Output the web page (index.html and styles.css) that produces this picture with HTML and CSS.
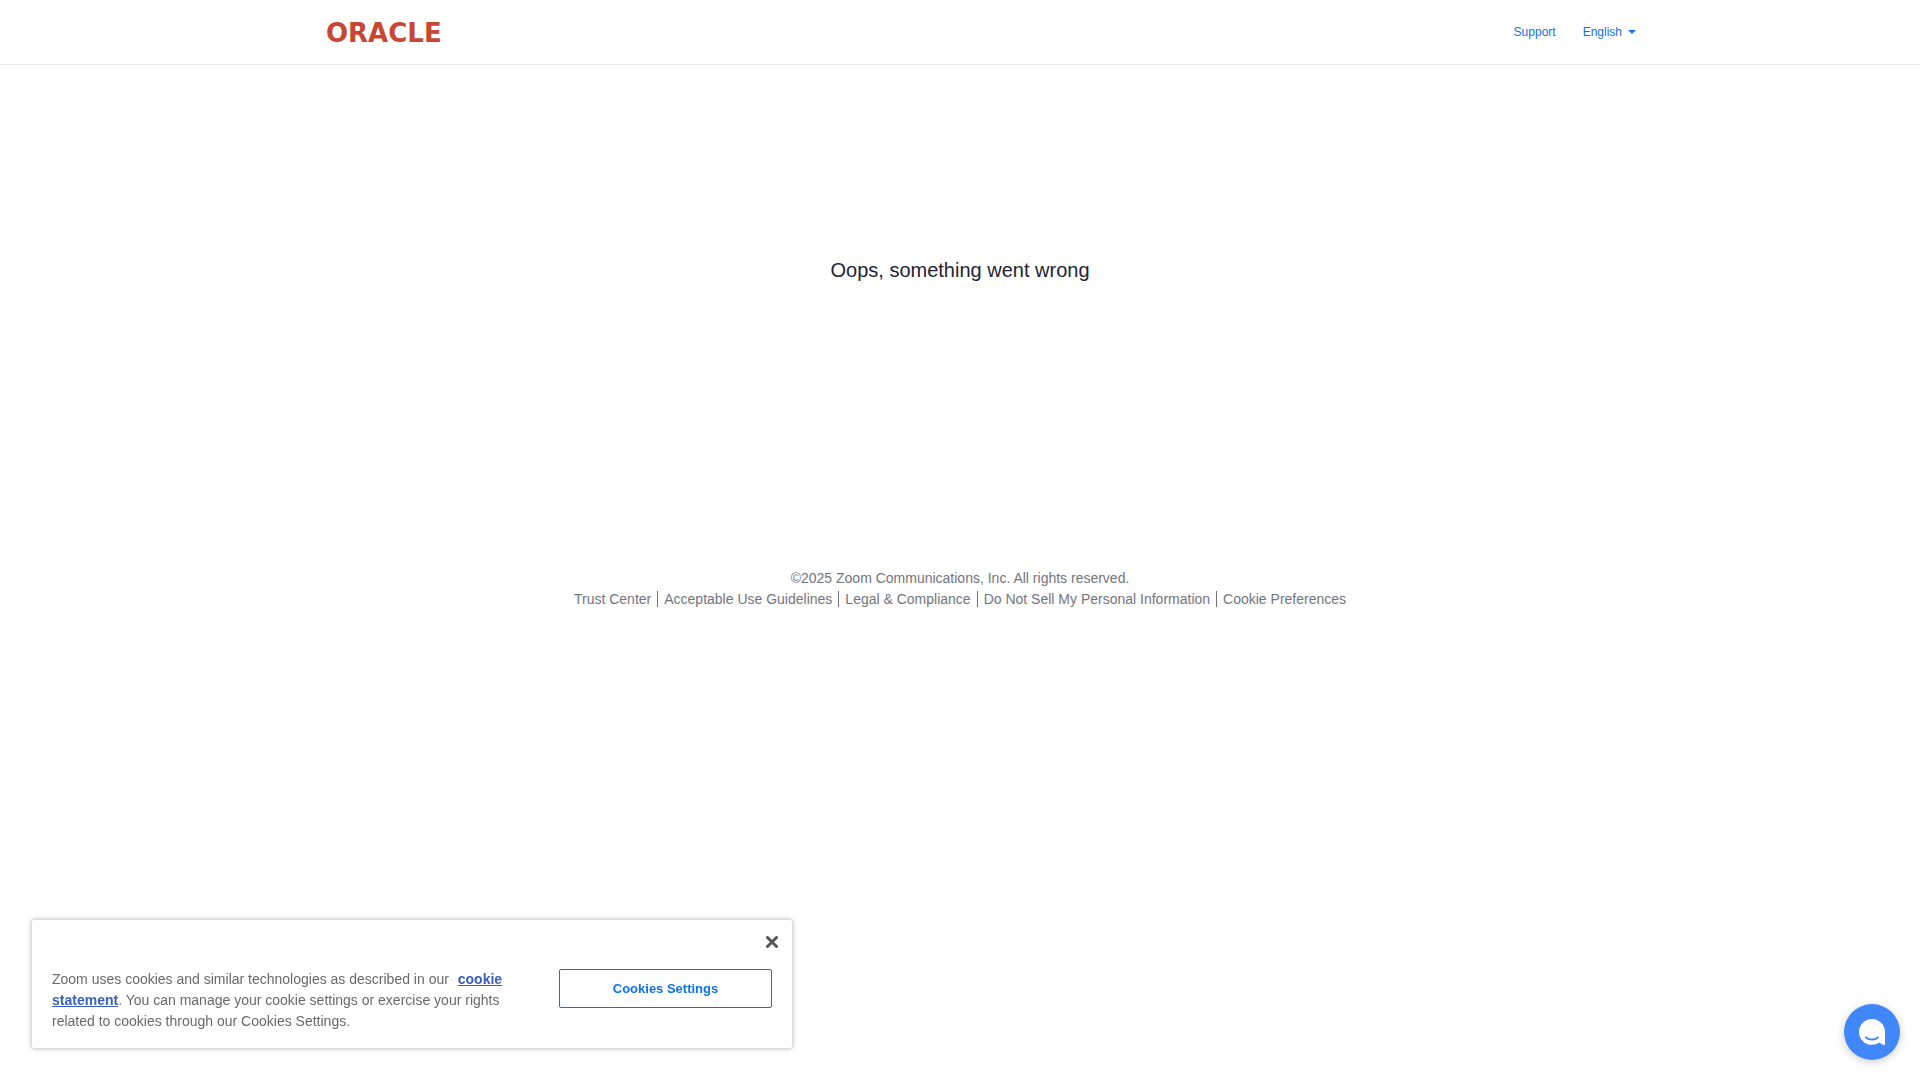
FILE: index.html
```html
<!DOCTYPE html>
<html lang="en">
<head>
<meta charset="utf-8">
<meta name="viewport" content="width=device-width, initial-scale=1">
<title>Error - Zoom</title>
<link rel="stylesheet" href="styles.css">
</head>
<body>
<header class="header">
  <div class="header-inner">
    <a class="logo" href="#" aria-label="Oracle home">
      <svg class="logo-mark" viewBox="0 0 128 32" aria-hidden="true"><text class="logo-text" x="0" y="26">ORACLE</text></svg>
    </a>
    <nav class="nav" aria-label="Main">
      <a class="nav-link" href="#">Support</a>
      <button class="nav-link language" type="button" aria-haspopup="true">English <span class="caret"></span></button>
    </nav>
  </div>
</header>
<main class="content">
  <h1 class="message">Oops, something went wrong</h1>
</main>
<footer class="footer">
  <p class="copyright">©2025 Zoom Communications, Inc. All rights reserved.</p>
  <ul class="footer-links">
    <li class="footer-item"><a class="footer-link" href="#">Trust Center</a></li>
    <li class="footer-item"><a class="footer-link" href="#">Acceptable Use Guidelines</a></li>
    <li class="footer-item"><a class="footer-link" href="#">Legal &amp; Compliance</a></li>
    <li class="footer-item"><a class="footer-link" href="#">Do Not Sell My Personal Information</a></li>
    <li class="footer-item"><a class="footer-link" href="#">Cookie Preferences</a></li>
  </ul>
</footer>
<section class="cookie-banner" aria-label="Cookie notice">
  <button class="close" type="button" aria-label="Close">
    <svg class="close-icon" viewBox="0 0 12 12" aria-hidden="true"><path d="M1.500 1.500l9 9M10.500 1.500l-9 9"/></svg>
  </button>
  <div class="cookie-row">
    <p class="cookie-text">Zoom uses cookies and similar technologies as described in our <a class="cookie-link" href="#">cookie statement</a>. You can manage your cookie settings or exercise your rights related to cookies through our Cookies Settings.</p>
    <button class="cookie-settings" type="button">Cookies Settings</button>
  </div>
</section>
<button class="chat" type="button" aria-label="Open chat">
  <svg class="chat-icon" viewBox="0 0 26 26" aria-hidden="true">
    <path class="chat-bubble" d="M13 0C20 0 26 5.600 26 12.700V25.200Q26 26.300 24.900 25.900Q22.300 25.300 20.500 23.500Q17.200 25.800 13 25.800C5.800 25.800 0 20 0 12.900S5.800 0 13 0Z"/>
    <path class="chat-smile" d="M7 18.400Q9.400 20.600 13 20.600T19 18.400"/>
  </svg>
</button>
</body>
</html>
```
FILE: styles.css
```css
* {
  box-sizing: border-box;
}

body {
  margin: 0;
  background: #fff;
  color: #747487;
  font-family: "Liberation Sans", Arial, sans-serif;
  font-size: 14px;
  line-height: 21px;
}

button {
  padding: 0;
  border: 0;
  background: none;
  font: inherit;
  cursor: pointer;
}

a {
  text-decoration: none;
}

.header {
  border-bottom: 1px solid #e8e8ed;
}

.header-inner {
  display: flex;
  align-items: center;
  justify-content: space-between;
  max-width: 1354px;
  height: 64px;
  margin: 0 auto;
  padding: 0 1px 0 43px;
}

.logo-mark {
  display: block;
  width: 128px;
  height: 32px;
}

.logo-text {
  fill: #c74634;
  font-family: "DejaVu Sans", sans-serif;
  font-size: 26px;
  font-weight: bold;
}

.nav {
  display: flex;
  align-items: center;
  gap: 27px;
}

.nav-link {
  color: #0e71eb;
  font-size: 12px;
  line-height: 20px;
}

.language {
  display: flex;
  align-items: center;
  gap: 6px;
}

.caret {
  border-top: 4px solid #0e71eb;
  border-right: 4px solid transparent;
  border-left: 4px solid transparent;
}

.content {
  padding: 190px 16px 280px;
  text-align: center;
}

.message {
  margin: 0;
  color: #232333;
  font-size: 20px;
  font-weight: normal;
  line-height: 30px;
}

.footer {
  padding: 3px 16px 24px;
  color: #747480;
}

.copyright {
  margin: 0;
  text-align: center;
}

.footer-links {
  display: flex;
  flex-wrap: wrap;
  justify-content: center;
  margin: 0;
  padding: 2px 0;
  list-style: none;
}

.footer-item {
  padding: 0 6px;
  line-height: 16px;
}

.footer-item + .footer-item {
  border-left: 1px solid #747480;
}

.footer-link {
  color: #747480;
}

.cookie-banner {
  position: fixed;
  bottom: 32px;
  left: 32px;
  width: calc(100% - 64px);
  max-width: 760px;
  padding: 49px 20px 16px;
  border-radius: 2px;
  background: #fff;
  box-shadow: 0 0 5px rgba(0, 0, 0, 0.35);
}

.cookie-row {
  display: flex;
  align-items: flex-start;
  justify-content: space-between;
  gap: 32px;
}

.cookie-text {
  max-width: 464px;
  margin: 0;
  color: #696969;
}

.cookie-link {
  margin-left: 5px;
  color: #3860be;
  font-weight: bold;
  text-decoration: underline;
}

.cookie-settings {
  flex: none;
  width: 213px;
  height: 39px;
  border: 1px solid #0e72ed;
  border-radius: 2px;
  color: #0e72ed;
  font-size: 13px;
  font-weight: bold;
}

.close {
  position: absolute;
  top: 16px;
  right: 14px;
}

.close-icon {
  display: block;
  width: 12px;
  height: 12px;
  fill: none;
  stroke: #565656;
  stroke-width: 3;
  stroke-linecap: round;
}

.chat {
  position: fixed;
  right: 20px;
  bottom: 20px;
  display: grid;
  place-items: center;
  width: 56px;
  height: 56px;
  border-radius: 50%;
  background: #4087fc;
  box-shadow: 0 2px 8px rgba(0, 0, 0, 0.2);
}

.chat-icon {
  width: 26px;
  height: 26px;
}

.chat-bubble {
  fill: #fff;
}

.chat-smile {
  fill: none;
  stroke: #4087fc;
  stroke-width: 2;
  stroke-linecap: round;
}
```
